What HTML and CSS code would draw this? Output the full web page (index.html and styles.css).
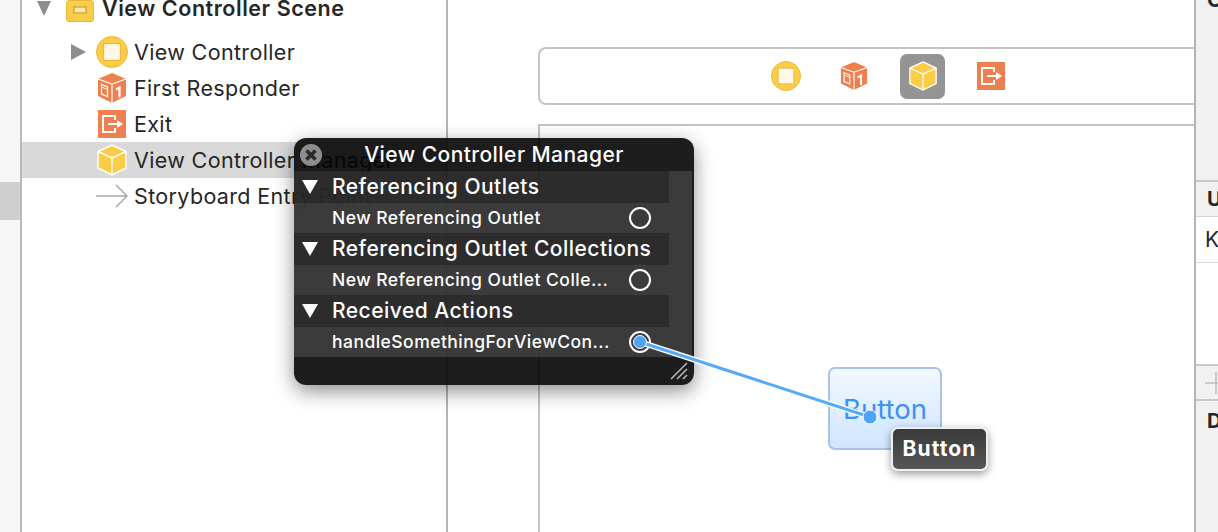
FILE: index.html
```html
<!DOCTYPE html>
<html lang="en">
<head>
<meta charset="utf-8">
<title>View Controller Manager</title>
<link rel="stylesheet" href="styles.css">
</head>
<body>
<svg class="defs" width="0" height="0">
  <defs>
    <symbol id="cube-yellow" viewBox="0 0 30 32">
      <path d="M15 1 29 7.500V24L15 31 1 24V7.500Z" fill="#fbcd46" stroke="#fff" stroke-width="1.400"/>
      <path d="M1 7.500 15 14 29 7.500M15 14V31" fill="none" stroke="#fff" stroke-width="1.400"/>
    </symbol>
    <symbol id="cube-orange" viewBox="0 0 30 32">
      <path d="M15 1 29 7V24L15 31 1 24V7Z" fill="#ee7f4e"/>
      <path d="M1 7 15 12 29 7M15 12V31" fill="none" stroke="#fff" stroke-width="1.200"/>
      <path d="M4.500 12.500 10.500 15V24.500L4.500 22Z" fill="none" stroke="#fff" stroke-width="1.200"/>
      <path d="M4.500 15 10.500 17.500" stroke="#fff" stroke-width="1"/>
      <path d="M19 17.500 22.500 15.500V25.500" fill="none" stroke="#fff" stroke-width="2.200"/>
    </symbol>
    <symbol id="exit" viewBox="0 0 28 28">
      <rect width="28" height="28" fill="#ee7f4e"/>
      <path d="M17 10V6H5V22H17V18" fill="none" stroke="#fff" stroke-width="2"/>
      <path d="M10 14H19" stroke="#fff" stroke-width="2"/>
      <path d="M19 10 25 14 19 18Z" fill="#fff"/>
    </symbol>
    <symbol id="vc" viewBox="0 0 32 32">
      <circle cx="16" cy="16" r="15.500" fill="#fbcd46" stroke="#e9b83c"/>
      <rect x="7" y="7" width="18" height="18" fill="#edb93c"/>
      <rect x="8.500" y="8.500" width="15" height="15" fill="#fff8e6" stroke="#fff" stroke-dasharray="1.500 1"/>
    </symbol>
  </defs>
</svg>

<div class="window">
  <aside class="gutter"><div class="gutter-mark"></div></aside>

  <nav class="outline">
    <div class="row scene">
      <span class="disc open"></span>
      <svg class="scene-icon" viewBox="0 0 28 22"><rect x=".5" y=".5" width="27" height="21" rx="2.500" fill="#fbcd46" stroke="#e9b83c"/><rect x="8" y="7" width="12" height="6" fill="#ffe9a8" stroke="#b9923a"/></svg>
      <span class="scene-title">View Controller Scene</span>
    </div>
    <div class="row"><span class="disc closed"></span><svg class="icon"><use href="#vc"/></svg><span>View Controller</span></div>
    <div class="row"><svg class="icon"><use href="#cube-orange"/></svg><span>First Responder</span></div>
    <div class="row"><svg class="icon icon-exit"><use href="#exit"/></svg><span>Exit</span></div>
    <div class="row selected"><svg class="icon"><use href="#cube-yellow"/></svg><span>View Controller Manager</span></div>
    <div class="row">
      <svg class="icon" viewBox="0 0 32 28"><path d="M0 14H31M20 3 31 14 20 25" fill="none" stroke="#a9a9a9" stroke-width="1.500"/></svg>
      <span>Storyboard Entry Point</span>
    </div>
  </nav>

  <main class="canvas">
    <div class="dock">
      <svg class="dock-icon"><use href="#vc"/></svg>
      <svg class="dock-icon"><use href="#cube-orange"/></svg>
      <span class="dock-active"><svg class="dock-icon"><use href="#cube-yellow"/></svg></span>
      <svg class="dock-icon dock-exit"><use href="#exit"/></svg>
    </div>
    <div class="view">
      <div class="ui-button">Button</div>
    </div>
  </main>

  <aside class="inspector">
    <div class="insp-top"><b>C</b></div>
    <div class="insp-head"><b>U</b></div>
    <div class="insp-list"><div class="insp-item">K</div></div>
    <div class="insp-plus"><svg viewBox="0 0 22 22" width="22" height="22"><path d="M0 11H22M11 0V22" stroke="#bdbdbd" stroke-width="1.500"/></svg></div>
    <div class="insp-head last"><b>D</b></div>
  </aside>
</div>

<section class="popover">
  <header class="pop-title">
    <svg class="pop-close" viewBox="0 0 22 22"><circle cx="11" cy="11" r="11" fill="#8d8d8d"/><path d="M6.500 6.500 15.500 15.500M15.500 6.500 6.500 15.500" stroke="#2b2b2b" stroke-width="3.600"/></svg>
    <span>View Controller Manager</span>
  </header>
  <div class="pop-body">
    <div class="pop-list">
      <div class="pop-sec"><i class="tri"></i>Referencing Outlets</div>
      <div class="pop-row"><span>New Referencing Outlet</span><i class="ring"></i></div>
      <div class="pop-sec"><i class="tri"></i>Referencing Outlet Collections</div>
      <div class="pop-row"><span>New Referencing Outlet Colle...</span><i class="ring"></i></div>
      <div class="pop-sec"><i class="tri"></i>Received Actions</div>
      <div class="pop-row"><span>handleSomethingForViewCon...</span><i class="ring"></i></div>
    </div>
    <div class="pop-scroll"></div>
  </div>
  <footer class="pop-foot">
    <svg viewBox="0 0 18 18" width="18" height="18"><path d="M1 17 17 1M7 17 17 7M13 17 17 13" stroke="#bbb" stroke-width="1.500"/></svg>
  </footer>
</section>

<svg class="wire" width="1218" height="532" viewBox="0 0 1218 532">
  <path d="M640 342 870 417" stroke="#fff" stroke-width="6"/>
  <path d="M640 342 870 417" stroke="#55aaf6" stroke-width="3"/>
  <circle cx="640" cy="342" r="6.500" fill="#4da6f5" stroke="#fff" stroke-width="1"/>
  <circle cx="870" cy="417" r="7" fill="#4da6f5" stroke="#fff" stroke-width="1"/>
</svg>

<div class="tip">Button</div>
</body>
</html>
```
FILE: styles.css
```css
* { box-sizing: border-box; }
html, body { margin: 0; padding: 0; }
body {
  width: 1218px;
  height: 532px;
  overflow: hidden;
  position: relative;
  background: #fff;
  font-family: "Inter", "Liberation Sans", sans-serif;
  color: #262626;
}
.defs { position: absolute; }
.window { display: flex; width: 1218px; height: 532px; }

.gutter {
  width: 22px;
  flex: none;
  background: #f6f6f6;
  border-right: 2px solid #b9b9b9;
  padding-top: 182px;
}
.gutter-mark { height: 38px; background: #cfcfcf; }

.outline {
  width: 426px;
  flex: none;
  border-right: 2px solid #b4b4b4;
  margin-top: -10px;
  overflow: hidden;
}
.row {
  display: flex;
  align-items: center;
  height: 36px;
  padding-left: 74px;
  gap: 6px;
  font-size: 21.500px;
  letter-spacing: .35px;
  white-space: nowrap;
  position: relative;
}
.row.selected { background: #d9d9d9; }
.row.scene { height: 36px; margin-bottom: 8px; padding-left: 44px; }
.scene-icon { width: 28px; height: 22px; flex: none; margin-right: 2px; margin-top: 6px; }
.scene-title { font-weight: 600; font-size: 21.500px; letter-spacing: .55px; }
.disc { width: 0; height: 0; border-style: solid; border-color: transparent; flex: none; }
.disc.open {
  position: absolute;
  left: 15px;
  top: 11px;
  border-width: 15px 7.500px 0;
  border-top-color: #8d8d8d;
}
.disc.closed {
  position: absolute;
  left: 49px;
  top: 10px;
  border-width: 8px 0 8px 15px;
  border-left-color: #8d8d8d;
}
.icon { width: 32px; height: 32px; flex: none; }
.icon-exit { width: 28px; height: 28px; margin: 0 2px; }

.canvas {
  flex: 1;
  position: relative;
  padding: 47px 0 0 90px;
  overflow: hidden;
}
.dock {
  height: 58px;
  border: 2px solid #c4c4c4;
  border-right: 0;
  border-radius: 8px 0 0 8px;
  display: flex;
  align-items: center;
  padding-left: 231px;
  gap: 38px;
}
.dock-icon { width: 30px; height: 30px; flex: none; display: block; }
.dock-active {
  width: 45px;
  height: 45px;
  background: #949494;
  border-radius: 7px;
  display: flex;
  align-items: center;
  justify-content: center;
  margin: 0 -7px;
}
.dock-exit { width: 28px; height: 28px; margin-left: 1px; }
.view {
  height: 420px;
  margin-top: 19px;
  border-top: 2px solid #c4c4c4;
  border-left: 2px solid #c4c4c4;
  position: relative;
}
.ui-button {
  position: absolute;
  left: 288px;
  top: 241px;
  width: 114px;
  height: 83px;
  border: 2px solid #a9c3e8;
  border-radius: 7px;
  background: linear-gradient(#f1f8ff, #cfe5fe);
  color: #3f8ff5;
  font-size: 27.500px;
  display: flex;
  align-items: center;
  justify-content: center;
}

.inspector {
  flex: none;
  width: 24px;
  border-left: 2px solid #b4b4b4;
  background: #f1f1f1;
  display: flex;
  flex-direction: column;
  font-size: 21px;
  overflow: hidden;
  white-space: nowrap;
}
.inspector b { font-weight: 700; }
.insp-top { height: 182px; flex: none; padding-left: 11px; border-bottom: 2px solid #c8c8c8; line-height: 0; }
.insp-head { height: 35px; flex: none; padding-left: 11px; display: flex; align-items: center; border-bottom: 1px solid #d4d4d4; font-size: 20px; }
.insp-head.last { border-bottom: 0; padding-top: 8px; height: 50px; align-items: flex-start; }
.insp-list { height: 149px; flex: none; background: #fff; border-bottom: 2px solid #c8c8c8; }
.insp-item { height: 46px; display: flex; align-items: center; padding-left: 9px; border-bottom: 1px solid #d8d8d8; }
.insp-plus { height: 35px; flex: none; padding: 6px 0 0 9px; border-bottom: 2px solid #c8c8c8; }

.popover {
  position: absolute;
  left: 294px;
  top: 138px;
  width: 400px;
  height: 247px;
  border-radius: 12px;
  background: rgba(4, 4, 4, .9);
  color: #fff;
  box-shadow: 0 6px 20px rgba(0, 0, 0, .45);
  display: flex;
  flex-direction: column;
  overflow: hidden;
}
.pop-title {
  height: 33px;
  flex: none;
  display: flex;
  align-items: center;
  justify-content: center;
  font-size: 21px;
  font-weight: 500;
  letter-spacing: .45px;
  position: relative;
  padding-bottom: 1px;
}
.pop-close { position: absolute; left: 6px; top: 6px; width: 22px; height: 22px; }
.pop-body { display: flex; flex: none; height: 186px; }
.pop-list { width: 375px; flex: none; }
.pop-scroll { width: 23px; background: rgba(70, 70, 70, .75); }
.pop-sec {
  height: 32px;
  display: flex;
  align-items: center;
  background: rgba(50, 50, 50, .75);
  font-size: 21px;
  font-weight: 500;
  letter-spacing: .47px;
  padding: 0 0 2px 38px;
  position: relative;
  white-space: nowrap;
}
.tri {
  position: absolute;
  left: 8px;
  top: 9px;
  width: 0;
  height: 0;
  border-style: solid;
  border-color: #fff transparent transparent;
  border-width: 14px 8px 0;
}
.pop-row {
  height: 30px;
  display: flex;
  align-items: center;
  justify-content: space-between;
  background: rgba(70, 70, 70, .75);
  font-size: 17.500px;
  font-weight: 500;
  letter-spacing: .47px;
  padding: 0 18px 0 38px;
  white-space: nowrap;
}
.pop-row span { margin-top: -2px; }
.ring {
  width: 22px;
  height: 22px;
  border: 2px solid #fff;
  border-radius: 50%;
  flex: none;
}
.pop-foot { flex: 1; display: flex; justify-content: flex-end; align-items: flex-end; padding: 0 6px 5px 0; }

.wire { position: absolute; left: 0; top: 0; pointer-events: none; }

.tip {
  position: absolute;
  left: 891px;
  top: 427px;
  width: 97px;
  height: 44px;
  border: 2px solid #eee;
  border-radius: 7px;
  background: linear-gradient(#3a3a3a, #555);
  box-shadow: 0 3px 9px rgba(0, 0, 0, .4);
  color: #fff;
  font-size: 21px;
  font-weight: 700;
  letter-spacing: 1.1px;
  padding-bottom: 2px;
  display: flex;
  align-items: center;
  justify-content: center;
}
```
